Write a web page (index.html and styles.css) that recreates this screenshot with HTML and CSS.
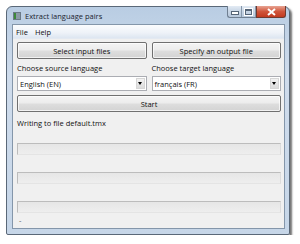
FILE: index.html
```html
<!DOCTYPE html>
<html lang="en">
<head>
  <meta charset="UTF-8">
  <title>Extract language pairs</title>
  <link rel="stylesheet" href="styles.css">
</head>
<body>
  <div class="window">
    <div class="titlebar">
      <span class="app-icon"></span>
      <span class="title">Extract language pairs</span>
      <div class="caption">
        <div class="cap-group">
          <span class="cap-btn"><span class="glyph-min"></span></span>
          <span class="cap-btn"><span class="glyph-max"></span></span>
        </div>
        <span class="cap-close">
          <svg width="9" height="8" viewBox="0 0 9 8"><path d="M1 1 L8 7 M8 1 L1 7" stroke="#fff" stroke-width="2"/></svg>
        </span>
      </div>
    </div>
    <div class="client">
      <div class="menubar">
        <span>File</span>
        <span>Help</span>
      </div>
      <div class="content">
        <div class="pair">
          <button class="btn">Select input files</button>
          <button class="btn">Specify an output file</button>
        </div>
        <div class="pair">
          <div class="field">
            <label>Choose source language</label>
            <div class="combo"><span>English (EN)</span><span class="arrow"></span></div>
          </div>
          <div class="field">
            <label>Choose target language</label>
            <div class="combo"><span>français (FR)</span><span class="arrow"></span></div>
          </div>
        </div>
        <button class="btn start">Start</button>
        <div class="status">Writing to file default.tmx</div>
        <div class="progress"></div>
        <div class="progress"></div>
        <div class="progress"></div>
        <div class="dash">-</div>
      </div>
    </div>
  </div>
</body>
</html>
```

FILE: styles.css
```css
body {
  margin: 0;
  background: #ffffff;
  font-family: "Open Sans", "Noto Sans", sans-serif;
  font-size: 7.5px;
  color: #111111;
}
.window {
  margin: 6px 0 0 6px;
  width: 284px;
  height: 229px;
  box-sizing: border-box;
  border: 1px solid #5a6878;
  border-radius: 6px 6px 2px 2px;
  background: linear-gradient(180deg, #b9cde3 0%, #cfdcec 30%, #c6d6e8 100%);
  box-shadow: 2px 2px 2px rgba(0,0,0,0.55);
  display: flex;
  flex-direction: column;
  padding: 0 4px 5px 5px;
}
.titlebar {
  height: 17px;
  display: flex;
  align-items: center;
  gap: 4px;
  position: relative;
}
.app-icon {
  width: 6px;
  height: 6px;
  margin-left: 1px;
  background: linear-gradient(90deg, #3d8a3a 0 40%, #8b9aa8 40%);
  border: 1px solid #6b7a88;
}
.title {
  color: #1b2430;
  font-size: 7.5px;
}
.caption {
  position: absolute;
  top: -1px;
  right: -1px;
  display: flex;
}
.cap-group {
  display: flex;
  border: 1px solid #6f7f91;
  border-top: none;
  border-right: none;
  border-radius: 0 0 0 3px;
  background: linear-gradient(180deg, #e3ebf4 0%, #c7d5e5 50%, #b7c8dc 100%);
}
.cap-btn {
  width: 13px;
  height: 11px;
  display: flex;
  align-items: center;
  justify-content: center;
  border-right: 1px solid #8798ab;
}
.glyph-min {
  width: 6px;
  height: 2px;
  margin-top: 3px;
  background: #ffffff;
  border: 1px solid #556577;
}
.glyph-max {
  width: 5px;
  height: 3px;
  background: transparent;
  border: 1px solid #556577;
  border-top-width: 2px;
  box-shadow: 0 0 0 1px #ffffff;
}
.cap-close {
  width: 28px;
  height: 11px;
  display: flex;
  align-items: center;
  justify-content: center;
  background: linear-gradient(180deg, #e8a493 0%, #d0553b 50%, #c23a20 100%);
  border: 1px solid #6f3a30;
  border-top: none;
  border-radius: 0 0 3px 0;
}
.client {
  flex: 1;
  background: #f0f0f0;
  border: 1px solid #8496aa;
  display: flex;
  flex-direction: column;
}
.menubar {
  height: 13px;
  display: flex;
  align-items: center;
  gap: 7px;
  padding-left: 3px;
  background: linear-gradient(180deg, #fbfcfe 0%, #eef2f8 60%, #dde6f1 100%);
  border-bottom: 1px solid #e3e9f1;
}
.content {
  padding: 3px 3px 0 4px;
  display: flex;
  flex-direction: column;
}
.pair {
  display: grid;
  grid-template-columns: 1fr 1fr;
  gap: 5px;
}
.btn {
  font-family: inherit;
  font-size: 7.5px;
  color: #111111;
  height: 17px;
  padding: 0;
  border: 1px solid #707070;
  border-radius: 2px;
  background: linear-gradient(180deg, #f4f4f4 0%, #ececec 48%, #dedede 52%, #d3d3d3 100%);
  box-shadow: inset 0 0 0 1px rgba(255,255,255,0.7);
}
.field label {
  display: block;
  height: 13px;
  line-height: 13px;
  margin: 3px 0 1px;
}
.combo {
  height: 15px;
  box-sizing: border-box;
  border: 1px solid #abadb3;
  background: #ffffff;
  display: flex;
  align-items: center;
  justify-content: space-between;
  padding-left: 2px;
}
.arrow {
  width: 9px;
  height: 11px;
  margin-right: 1px;
  box-sizing: border-box;
  border: 1px solid #d6d6d6;
  background: linear-gradient(180deg, #f2f2f2, #dcdcdc);
  position: relative;
}
.arrow::after {
  content: "";
  position: absolute;
  left: 1px;
  top: 3px;
  border-left: 2.5px solid transparent;
  border-right: 2.5px solid transparent;
  border-top: 3px solid #000000;
}
.start {
  margin-top: 4px;
}
.status {
  height: 12px;
  line-height: 12px;
  margin-top: 5px;
}
.progress {
  height: 12px;
  box-sizing: border-box;
  margin-top: 17px;
  border: 1px solid #bcbcbc;
  border-bottom-color: #e4e4e4;
  border-right-color: #dcdcdc;
  background: linear-gradient(180deg, #e6e6e6 0%, #eeeeee 100%);
}
.status + .progress {
  margin-top: 14px;
}
.dash {
  margin-top: 2px;
  padding-left: 2px;
  color: #555555;
}
```
